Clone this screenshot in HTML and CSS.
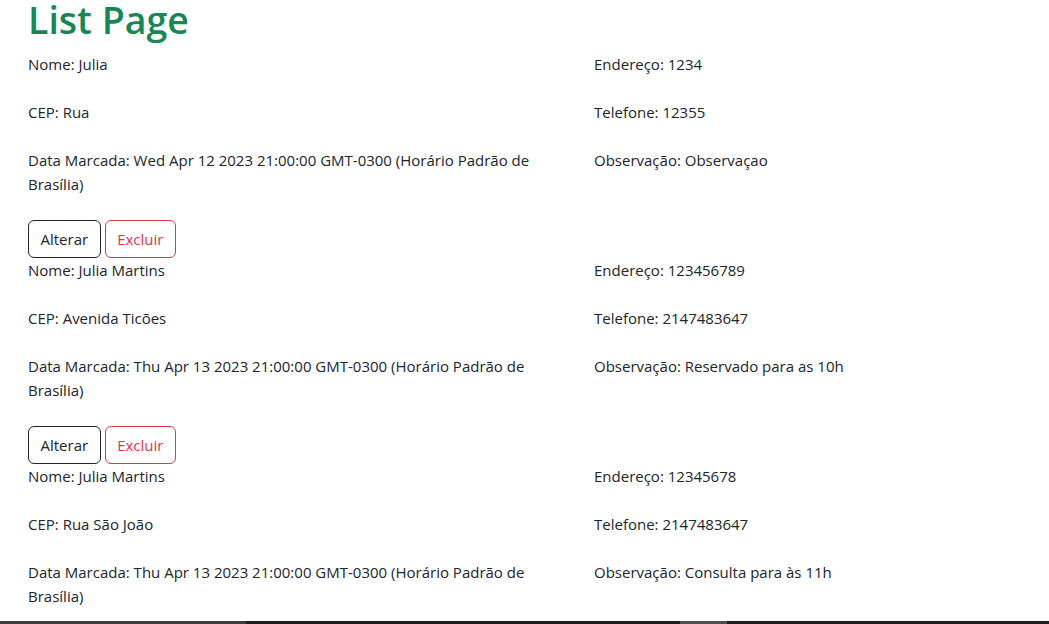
FILE: index.html
```html
<!DOCTYPE html>
<html lang="pt-BR">
<head>
<meta charset="utf-8">
<title>List Page</title>
<link rel="stylesheet" href="styles.css">
</head>
<body>
<main class="page">
  <h1 class="title">List Page</h1>

  <section class="record">
    <div class="fields">
      <p>Nome: Julia</p>
      <p>Endereço: 1234</p>
      <p>CEP: Rua</p>
      <p>Telefone: 12355</p>
      <p>Data Marcada: Wed Apr 12 2023 21:00:00 GMT-0300 (Horário Padrão de Brasília)</p>
      <p>Observação: Observaçao</p>
    </div>
    <div class="actions">
      <button class="btn btn-dark">Alterar</button>
      <button class="btn btn-danger">Excluir</button>
    </div>
  </section>

  <section class="record">
    <div class="fields">
      <p>Nome: Julia Martins</p>
      <p>Endereço: 123456789</p>
      <p>CEP: Avenida Ticões</p>
      <p>Telefone: 2147483647</p>
      <p>Data Marcada: Thu Apr 13 2023 21:00:00 GMT-0300 (Horário Padrão de Brasília)</p>
      <p>Observação: Reservado para as 10h</p>
    </div>
    <div class="actions">
      <button class="btn btn-dark">Alterar</button>
      <button class="btn btn-danger">Excluir</button>
    </div>
  </section>

  <section class="record">
    <div class="fields">
      <p>Nome: Julia Martins</p>
      <p>Endereço: 12345678</p>
      <p>CEP: Rua São João</p>
      <p>Telefone: 2147483647</p>
      <p>Data Marcada: Thu Apr 13 2023 21:00:00 GMT-0300 (Horário Padrão de Brasília)</p>
      <p>Observação: Consulta para às 11h</p>
    </div>
    <div class="actions">
      <button class="btn btn-dark">Alterar</button>
      <button class="btn btn-danger">Excluir</button>
    </div>
  </section>
</main>
<div class="scrollbar"></div>
</body>
</html>
```
FILE: styles.css
```css
html, body {
  margin: 0;
  padding: 0;
  background: #fff;
}

body {
  font-family: "Open Sans", "Noto Sans", sans-serif;
  font-size: 15px;
  line-height: 24px;
  color: #212529;
}

.page {
  padding: 0 28px;
}

.title {
  margin: 0 0 12px;
  font-size: 37.5px;
  line-height: 40px;
  font-weight: 600;
  color: #198754;
}

.fields {
  display: grid;
  grid-template-columns: 542px 1fr;
  column-gap: 24px;
}

.fields p {
  margin: 0 0 24px;
}

.actions {
  display: flex;
  gap: 4px;
}

.btn {
  font-family: inherit;
  font-size: 15px;
  line-height: 24px;
  padding: 6px 11.5px;
  border: 1px solid;
  border-radius: 6px;
  background: #fff;
  cursor: pointer;
}

.btn-dark {
  color: #212529;
  border-color: #212529;
}

.btn-danger {
  color: #dc3545;
  border-color: #dc3545;
}

.scrollbar {
  position: fixed;
  left: 0;
  right: 0;
  bottom: 0;
  height: 3px;
  background: linear-gradient(to right,
    #3c3c3c 0, #3c3c3c 246px,
    #1c1c1c 246px, #1c1c1c 680px,
    #4e4e4e 680px, #4e4e4e 727px,
    #1e1e1e 727px);
}
```
